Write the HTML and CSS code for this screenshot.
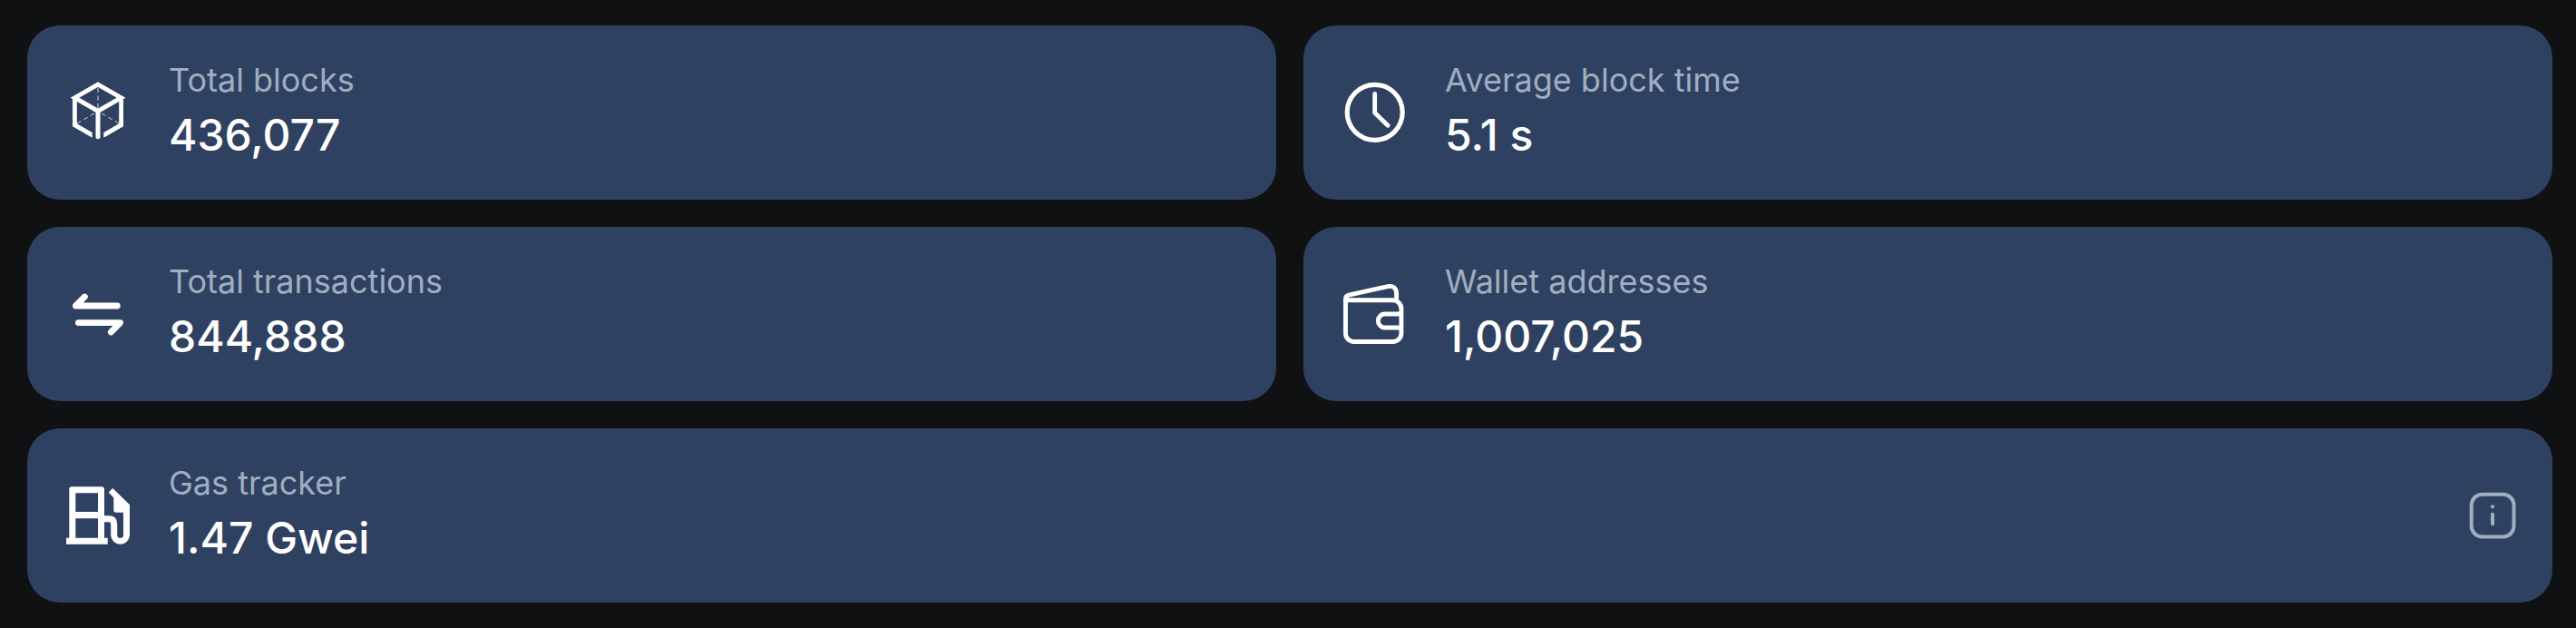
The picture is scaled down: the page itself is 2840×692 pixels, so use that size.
FILE: index.html
```html
<!DOCTYPE html>
<html lang="en">
<head>
    <meta charset="UTF-8">
    <meta name="viewport" content="width=device-width, initial-scale=1.0">
    <title>Network stats</title>
    <link rel="stylesheet" href="styles.css">
</head>
<body>
    <main class="stats">
        <div class="card">
            <svg class="icon" viewBox="0 0 84 84" fill="none" stroke="currentColor">
                <path d="M42 11.1 67.6 25.7 42 40.4 16.4 25.7Z" stroke-width="4.8"/>
                <path d="M42 40.4V68.7" stroke-width="5" stroke-linecap="round"/>
                <path d="M14 24.2V57.2L35.7 69.7V64L18.8 54.3V26ZM70 24.2V57.2L48.3 69.7V64L65.2 54.3V26Z" fill="currentColor" stroke="none"/>
                <path d="M42 37V13M38 43 18 54.5M46 43 66 54.5" stroke-width="0.8" stroke-dasharray="5 3.5"/>
            </svg>
            <div class="info">
                <div class="label">Total blocks</div>
                <div class="value">436,077</div>
            </div>
        </div>

        <div class="card">
            <svg class="icon" viewBox="0 0 84 84" fill="none" stroke="currentColor" stroke-width="4.8" stroke-linecap="round" stroke-linejoin="round">
                <circle cx="42.7" cy="41.8" r="30.5" stroke-width="5.2"/>
                <path d="M42.7 21.5V42.2L57 56.2"/>
            </svg>
            <div class="info">
                <div class="label">Average block time</div>
                <div class="value">5.1 s</div>
            </div>
        </div>

        <div class="card">
            <svg class="icon" viewBox="0 0 84 84" fill="none" stroke="currentColor" stroke-width="6.8" stroke-linecap="round" stroke-linejoin="round">
                <path d="M63.3 33H17.4L27.4 23"/>
                <path d="M20.4 51.6H66.6L56.3 62"/>
            </svg>
            <div class="info">
                <div class="label">Total transactions</div>
                <div class="value">844,888</div>
            </div>
        </div>

        <div class="card">
            <svg class="icon" viewBox="0 0 84 84" fill="none" stroke="currentColor" stroke-width="4.9">
                <path d="M10.5 26.7H62.5A9.4 9.4 0 0 1 71.9 36.1V63.3A9.2 9.2 0 0 1 62.7 72.5H19.7A9.2 9.2 0 0 1 10.5 63.3V25.5Q10.5 22 14 21.2L57 11.6Q66.6 10.2 66.6 20V28.5"/>
                <path d="M71.9 42H53.8A7.5 7.5 0 0 0 53.8 57H71.9"/>
            </svg>
            <div class="info">
                <div class="label">Wallet addresses</div>
                <div class="value">1,007,025</div>
            </div>
        </div>

        <div class="card wide">
            <svg class="icon" viewBox="0 0 84 84" fill="currentColor">
                <path fill-rule="evenodd" d="M7 66.7H10.3V13.3Q10.3 10.3 13.3 10.3H46Q49 10.3 49 13.3V66.7H52.7V73.7H7ZM17.3 17.3V38H42V17.3ZM17.3 45.3V66.7H42V45.3Z"/>
                <path d="M48 45.7H54Q59.7 45.7 59.7 51.5V63.4A6.9 6.9 0 0 0 73.5 63.4V36" fill="none" stroke="currentColor" stroke-width="7"/>
                <path d="M53.7 16.6 58.3 11.9 77 30.3V38.7H62Q59.3 38.7 59.3 36V22.4Z"/>
            </svg>
            <div class="info">
                <div class="label">Gas tracker</div>
                <div class="value">1.47 Gwei</div>
            </div>
            <svg class="hint" viewBox="0 0 60 60" fill="none" stroke="currentColor" stroke-width="4">
                <rect x="6.7" y="6.7" width="46.8" height="46.8" rx="12"/>
                <path d="M30 28.8V39.3" stroke-linecap="round"/>
                <circle cx="30" cy="20.3" r="2.1" fill="currentColor" stroke="none"/>
            </svg>
        </div>
    </main>
</body>
</html>
```

FILE: styles.css
```css
body {
    margin: 0;
    background: #101112;
    font-family: Inter, sans-serif;
}

.stats {
    display: grid;
    grid-template-columns: 1fr 1fr;
    gap: 30px;
    padding: 28px 26px 28px 30px;
}

.card {
    display: flex;
    align-items: center;
    gap: 36px;
    height: 192px;
    padding: 0 36px;
    box-sizing: border-box;
    border-radius: 36px;
    background: #2f4161;
    color: #fff;
}

.wide {
    grid-column: span 2;
}

.icon {
    width: 84px;
    height: 84px;
    flex-shrink: 0;
}

.info {
    flex: 1;
}

.label {
    font-size: 36px;
    line-height: 50px;
    color: #a0aec0;
}

.value {
    font-size: 48px;
    line-height: 72px;
    font-weight: 500;
}

.hint {
    width: 60px;
    height: 60px;
    color: #a0aec0;
}
```
